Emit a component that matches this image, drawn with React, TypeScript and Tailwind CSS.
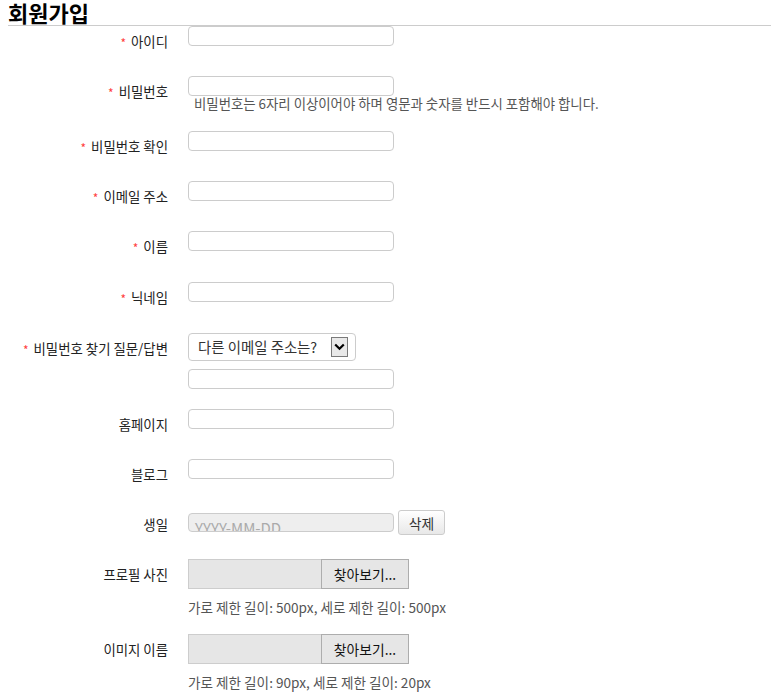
import React from "react";

const font = { fontFamily: '"Noto Sans CJK KR", "Noto Sans", sans-serif' };

function Label({ text, req }: { text: string; req?: boolean }) {
  return (
    <div className="w-[160px] shrink-0 text-right pt-[6px] text-[13.4px] leading-[18px] text-[#222] whitespace-nowrap">
      {req && <span className="text-[#ff4040] text-[12px] mr-[5px] relative top-[1px]">*</span>}
      {text}
    </div>
  );
}

function TextInput({ className = "" }: { className?: string }) {
  return (
    <div className={`w-[206px] h-[20px] border border-[#cccccc] rounded-[4px] bg-white ${className}`} />
  );
}

function FileInput() {
  return (
    <div className="flex w-[221px] h-[30px]">
      <div className="w-[133px] h-full bg-[#e6e6e6] border border-[#cdcdcd] border-r-0" />
      <div className="w-[88px] h-full bg-[#e6e6e6] border border-[#adadad] flex items-center justify-center text-[13.8px] leading-[18px] text-[#111]">
        찾아보기...
      </div>
    </div>
  );
}

function Row({
  label,
  req,
  h,
  children,
}: {
  label: string;
  req?: boolean;
  h: string;
  children: React.ReactNode;
}) {
  return (
    <div className={`flex ${h}`}>
      <Label text={label} req={req} />
      <div className="ml-[20px]">{children}</div>
    </div>
  );
}

export default function App() {
  return (
    <div className="bg-white w-[775px] h-[698px] overflow-hidden" style={font}>
      <div className="ml-[8px] w-[763px]">
        <h2 className="text-[22px] font-bold leading-[25px] h-[26px] border-b border-[#cccccc] text-black">
          회원가입
        </h2>

        <Row label="아이디" req h="h-[50px]">
          <TextInput />
        </Row>

        <Row label="비밀번호" req h="h-[55px]">
          <TextInput />
          <div className="pl-[6px] text-[13.4px] leading-[15px] text-[#555] whitespace-nowrap">
            비밀번호는 6자리 이상이어야 하며 영문과 숫자를 반드시 포함해야 합니다.
          </div>
        </Row>

        <Row label="비밀번호 확인" req h="h-[50px]">
          <TextInput />
        </Row>

        <Row label="이메일 주소" req h="h-[50px]">
          <TextInput />
        </Row>

        <Row label="이름" req h="h-[51px]">
          <TextInput />
        </Row>

        <Row label="닉네임" req h="h-[51px]">
          <TextInput />
        </Row>

        <Row label="비밀번호 찾기 질문/답변" req h="h-[76px]">
          <div className="w-[168px] h-[28px] border border-[#cccccc] rounded-[4px] flex items-center pl-[9px] pr-[7px] justify-between">
            <span className="text-[14.4px] text-[#333] leading-[18px] whitespace-nowrap">다른 이메일 주소는?</span>
            <div className="w-[17px] h-[20px] bg-[#e9e9e9] border border-[#7a7a7a] flex items-center justify-center shrink-0">
              <svg width="11" height="8" viewBox="0 0 11 8">
                <path d="M1.2 1.5 L5.5 5.8 L9.8 1.5" fill="none" stroke="#000" strokeWidth="2.2" />
              </svg>
            </div>
          </div>
          <TextInput className="mt-[8px]" />
        </Row>

        <Row label="홈페이지" h="h-[50px]">
          <TextInput />
        </Row>

        <Row label="블로그" h="h-[50px]">
          <TextInput />
        </Row>

        <Row label="생일" h="h-[50px]">
          <div className="flex items-start">
            <div className="mt-[4px] w-[206px] h-[19px] border border-[#cccccc] rounded-[4px] bg-[#eeeeee] overflow-hidden">
              <div className="pl-[6px] pt-[5px] text-[15px] leading-[18px] text-[#aaaaaa] whitespace-nowrap">YYYY-MM-DD</div>
            </div>
            <div className="ml-[4px] mt-[1px] w-[47px] h-[25px] border border-[#cccccc] rounded-[3px] bg-gradient-to-b from-white to-[#e8e8e8] flex items-center justify-center text-[13.8px] leading-[18px] text-[#333]">
              삭제
            </div>
          </div>
        </Row>

        <Row label="프로필 사진" h="h-[75px]">
          <FileInput />
          <div className="mt-[9px] text-[13.6px] leading-[18px] text-[#555] whitespace-nowrap">
            가로 제한 길이: 500px, 세로 제한 길이: 500px
          </div>
        </Row>

        <Row label="이미지 이름" h="h-[64px]">
          <FileInput />
          <div className="mt-[9px] text-[13.6px] leading-[18px] text-[#555] whitespace-nowrap">
            가로 제한 길이: 90px, 세로 제한 길이: 20px
          </div>
        </Row>
      </div>
    </div>
  );
}
